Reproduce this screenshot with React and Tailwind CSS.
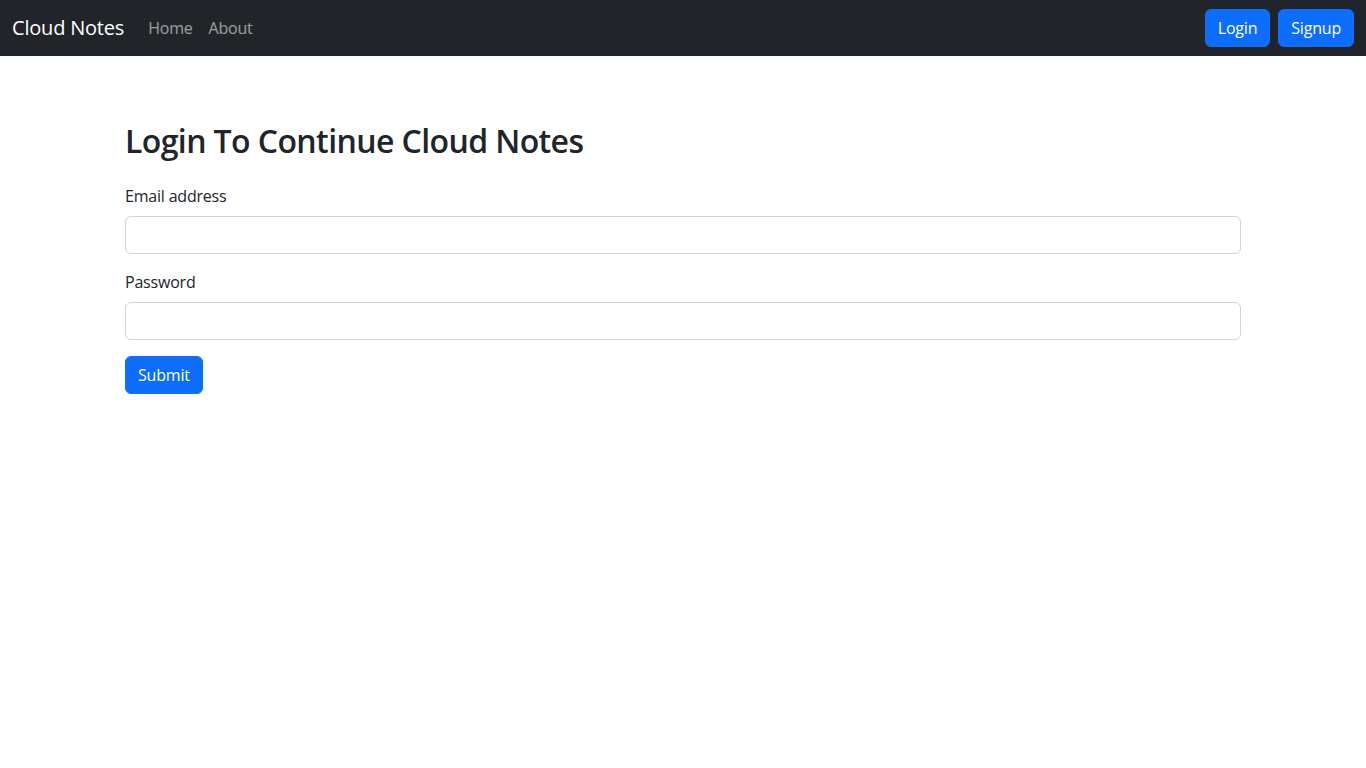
import React, { useState } from 'react';

const Navbar = () => {
  return (
    <nav className="h-14 bg-[#212529] flex items-center justify-between px-3">
      <div className="flex items-center">
        <a href="#" className="text-xl leading-[30px] py-[5px] mr-4 text-white">Cloud Notes</a>
        <ul className="flex items-center">
          <li><a href="#" className="block px-2 py-2 text-base leading-6 text-white/55">Home</a></li>
          <li><a href="#" className="block px-2 py-2 text-base leading-6 text-white/55">About</a></li>
        </ul>
      </div>
      <div className="flex items-center gap-2">
        <a href="#" className="block px-3 py-[6px] border border-[#0d6efd] bg-[#0d6efd] text-white text-base leading-6 rounded-md">Login</a>
        <a href="#" className="block px-3 py-[6px] border border-[#0d6efd] bg-[#0d6efd] text-white text-base leading-6 rounded-md">Signup</a>
      </div>
    </nav>
  );
};

export default function App() {
  const [credentials, setCredentials] = useState({ email: '', password: '' });

  const onChange = (e) => {
    setCredentials({ ...credentials, [e.target.name]: e.target.value });
  };

  return (
    <div className="min-h-screen bg-white text-[#212529] font-['Open_Sans',sans-serif] tracking-[-0.2px]">
      <Navbar />
      <div className="w-[1140px] mx-auto px-3 pt-[66px]">
        <h2 className="text-[32px] leading-[1.2] font-semibold tracking-[-0.6px] mb-6">Login To Continue Cloud Notes</h2>
        <form onSubmit={(e) => e.preventDefault()}>
          <div className="mb-4">
            <label htmlFor="email" className="block mb-2 text-base leading-6">Email address</label>
            <input
              type="email"
              id="email"
              name="email"
              value={credentials.email}
              onChange={onChange}
              className="block w-full h-[38px] px-3 border border-[#ced4da] rounded-md bg-white outline-none"
            />
          </div>
          <div className="mb-4">
            <label htmlFor="password" className="block mb-2 text-base leading-6">Password</label>
            <input
              type="password"
              id="password"
              name="password"
              value={credentials.password}
              onChange={onChange}
              className="block w-full h-[38px] px-3 border border-[#ced4da] rounded-md bg-white outline-none"
            />
          </div>
          <button type="submit" className="px-3 py-[6px] border border-[#0d6efd] bg-[#0d6efd] text-white text-base leading-6 rounded-md">
            Submit
          </button>
        </form>
      </div>
    </div>
  );
}
